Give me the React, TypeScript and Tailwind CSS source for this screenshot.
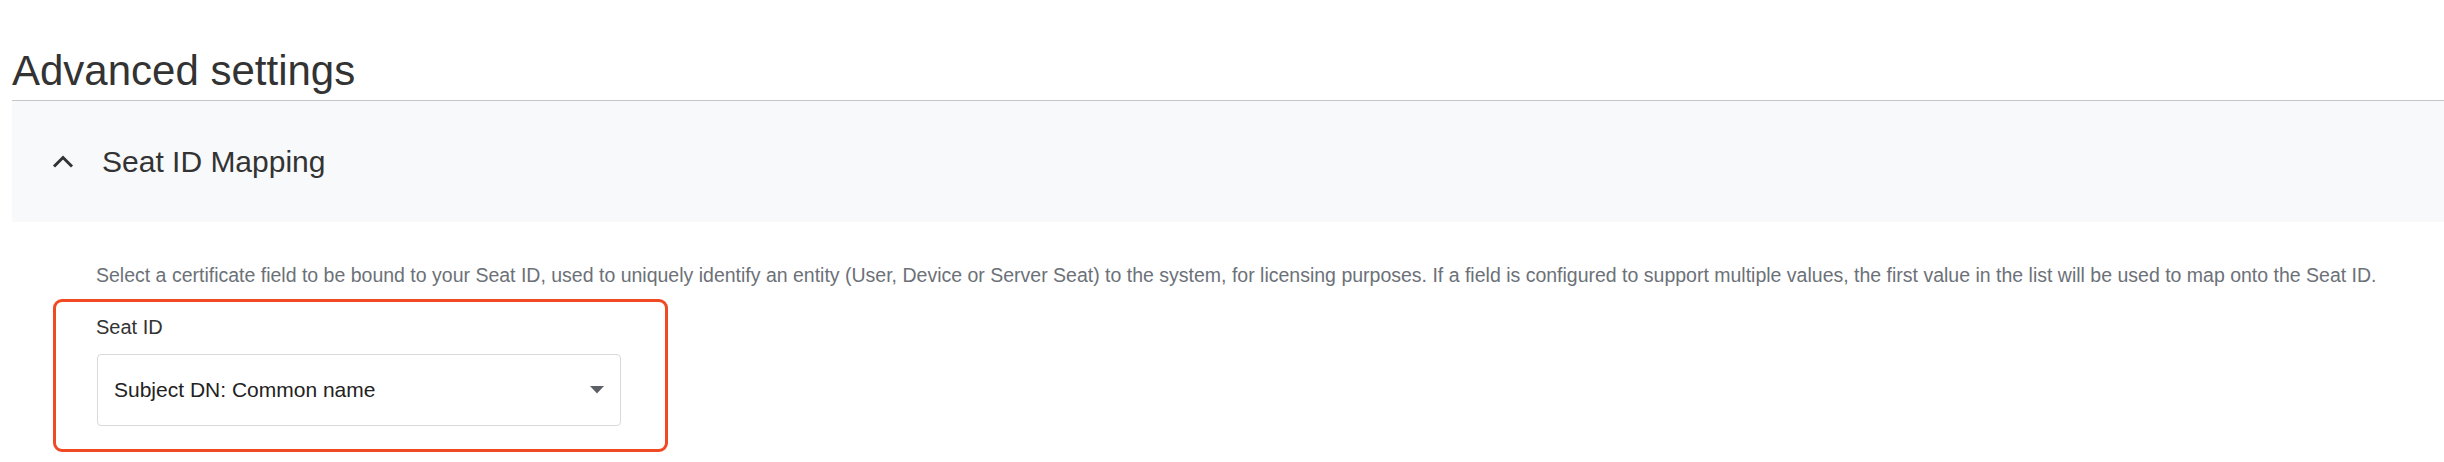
import React from 'react';

const SEAT_ID_HELP =
  'Select a certificate field to be bound to your Seat ID, used to uniquely identify an entity (User, Device or Server Seat) to the system, for licensing purposes. If a field is configured to support multiple values, the first value in the list will be used to map onto the Seat ID.';

const ChevronUp: React.FC = () => (
  <svg width="22" height="13" viewBox="0 0 22 13" fill="none" className="shrink-0">
    <polyline points="2,11.5 11,2.5 20,11.5" stroke="#333333" strokeWidth="3" strokeLinejoin="miter" />
  </svg>
);

const CaretDown: React.FC = () => (
  <svg width="14" height="8" viewBox="0 0 14 8" className="shrink-0">
    <polygon points="0,0 14,0 7,7.5" fill="#5c5f66" />
  </svg>
);

const App: React.FC = () => {
  return (
    <div className="min-h-[462px] bg-white pl-[12px] font-['Liberation_Sans',Arial,sans-serif]">
      {/* Page title */}
      <div className="border-b border-[#c6c6c6]">
        <h1 className="pt-[47px] pb-[5px] text-[42px] leading-[48px] text-[#333333]">Advanced settings</h1>
      </div>

      {/* Accordion header */}
      <div className="flex h-[121px] items-center bg-[#f8f9fb] pl-[40px]">
        <ChevronUp />
        <span className="ml-[28px] text-[30px] leading-[36px] text-[#333333]">Seat ID Mapping</span>
      </div>

      {/* Accordion body */}
      <div className="pt-[41px]">
        <p className="pl-[84px] text-[19.5px] leading-[24px] text-[#6c7178]">{SEAT_ID_HELP}</p>

        <div className="ml-[41px] mt-[12px] h-[153px] w-[615px] rounded-[9px] border-[3px] border-[#f04a24] pl-[40px] pt-[13px]">
          <label className="block text-[20px] leading-[24px] text-[#333333]">Seat ID</label>
          <div className="ml-px mt-[15px] flex h-[72px] w-[524px] items-center justify-between rounded-[4px] border border-[#d9d9d9] bg-white pl-[16px] pr-[16px]">
            <span className="text-[21px] leading-[26px] text-[#222222]">Subject DN: Common name</span>
            <CaretDown />
          </div>
        </div>
      </div>
    </div>
  );
};

export default App;
